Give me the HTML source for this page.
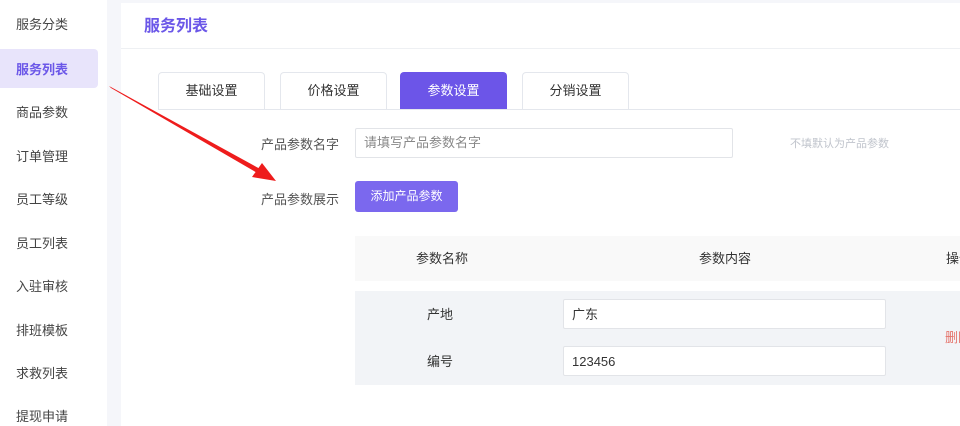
<!DOCTYPE html>
<html><head><meta charset="utf-8"><style>
*{margin:0;padding:0;box-sizing:border-box}
body{width:960px;height:426px;overflow:hidden;background:#f5f6fa;font-family:"Liberation Sans","Noto Sans CJK SC",sans-serif;font-size:13px;color:#333;position:relative}
div{white-space:nowrap}
.side{position:absolute;left:0;top:0;width:107px;height:426px;background:#fff}
.si{position:absolute;left:16px;font-size:13px;color:#444;line-height:16px}
.act{position:absolute;left:0;top:49px;width:98px;height:39px;background:#e8e4fb;border-radius:0 4px 4px 0}
.main{position:absolute;left:121px;top:3px;width:839px;height:423px;background:#fff}
.abs{position:absolute;line-height:16px}
.title{left:23px;top:16px;font-size:16px;font-weight:bold;color:#6b57e8}
.tab{position:absolute;top:69px;height:37px;width:107px;border:1px solid #e4e7ed;border-bottom:none;border-radius:4px 4px 0 0;text-align:center;line-height:36px;font-size:13px}
.inp{position:absolute;background:#fff;border:1px solid #e2e4e8;border-radius:2px;padding-left:8px;font-size:13px}
</style></head><body>
<div class="side">
<div class="act"></div>
<div class="si" style="top:17px">服务分类</div>
<div class="si" style="top:62px;color:#6b57e8;font-weight:bold">服务列表</div>
<div class="si" style="top:105px">商品参数</div>
<div class="si" style="top:149px">订单管理</div>
<div class="si" style="top:192px">员工等级</div>
<div class="si" style="top:236px">员工列表</div>
<div class="si" style="top:279px">入驻审核</div>
<div class="si" style="top:323px">排班模板</div>
<div class="si" style="top:366px">求救列表</div>
<div class="si" style="top:409px">提现申请</div>
</div>
<div class="main">
<div class="abs title">服务列表</div>
<div class="abs" style="left:0;top:45px;width:839px;height:1px;background:#eef0f3"></div>
<div class="tab" style="left:37px">基础设置</div>
<div class="tab" style="left:159px">价格设置</div>
<div class="tab" style="left:279px;background:#6c55e8;color:#fff;border-color:#6c55e8">参数设置</div>
<div class="tab" style="left:401px">分销设置</div>
<div class="abs" style="left:37px;top:106px;width:802px;height:1px;background:#e4e7ed"></div>
<div class="abs" style="left:140px;top:134px;color:#555">产品参数名字</div>
<div class="inp" style="left:234px;top:125px;width:378px;height:30px;line-height:28px;color:#888">请填写产品参数名字</div>
<div class="abs" style="left:669px;top:133px;font-size:11px;color:#c0c4cc">不填默认为产品参数</div>
<div class="abs" style="left:140px;top:189px;color:#555">产品参数展示</div>
<div class="abs" style="left:234px;top:178px;width:103px;height:31px;background:#7b68ee;border-radius:3px;color:#fff;text-align:center;line-height:31px;font-size:12px">添加产品参数</div>
<div class="abs" style="left:234px;top:233px;width:605px;height:45px;background:#f9f9f9"></div>
<div class="abs" style="left:295px;top:248px">参数名称</div>
<div class="abs" style="left:578px;top:248px">参数内容</div>
<div class="abs" style="left:825px;top:248px">操作</div>
<div class="abs" style="left:234px;top:288px;width:605px;height:94px;background:#f2f4f7"></div>
<div class="abs" style="left:306px;top:304px">产地</div>
<div class="abs" style="left:306px;top:351px">编号</div>
<div class="inp" style="left:442px;top:296px;width:323px;height:30px;line-height:30px">广东</div>
<div class="inp" style="left:442px;top:343px;width:323px;height:30px;line-height:30px">123456</div>
<div class="abs" style="left:824px;top:327px;color:#e5736b">删除</div>
</div>
<svg class="abs" style="left:0;top:0" width="960" height="426">
<polygon points="109,86 262,170 259,174 111,88" fill="#ee1c1c"/>
<polygon points="276,181 252,177 262,163" fill="#ee1c1c"/>
</svg>
</body></html>
